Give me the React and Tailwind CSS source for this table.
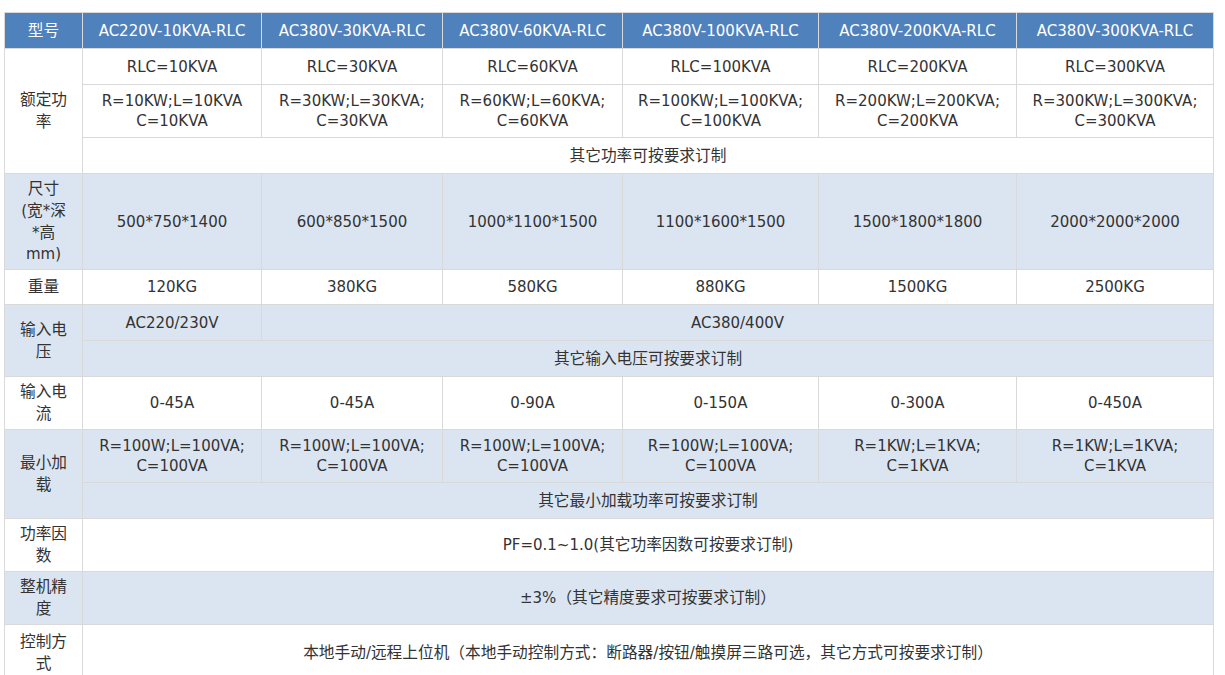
import React from 'react';

const models = [
	'AC220V-10KVA-RLC',
	'AC380V-30KVA-RLC',
	'AC380V-60KVA-RLC',
	'AC380V-100KVA-RLC',
	'AC380V-200KVA-RLC',
	'AC380V-300KVA-RLC',
];

const rlc = ['10', '30', '60', '100', '200', '300'];
const sizes = ['500*750*1400', '600*850*1500', '1000*1100*1500', '1100*1600*1500', '1500*1800*1800', '2000*2000*2000'];
const weights = ['120KG', '380KG', '580KG', '880KG', '1500KG', '2500KG'];
const currents = ['0-45A', '0-45A', '0-90A', '0-150A', '0-300A', '0-450A'];
const minLoads = [
	['R=100W;L=100VA;', 'C=100VA'],
	['R=100W;L=100VA;', 'C=100VA'],
	['R=100W;L=100VA;', 'C=100VA'],
	['R=100W;L=100VA;', 'C=100VA'],
	['R=1KW;L=1KVA;', 'C=1KVA'],
	['R=1KW;L=1KVA;', 'C=1KVA'],
];

const td = 'border border-[#d9d9d9] text-center align-middle px-2 leading-[20px]';
const light = 'bg-[#dbe5f1]';

// chinese runs come out a bit larger than the latin ones in the original
function T({ s }) {
	return s.split(/([\u3000-\u9fff\uff00-\uffef]+)/).map((part, i) =>
		i % 2 ? (
			<span key={i} className="text-[15.7px]">
				{part}
			</span>
		) : (
			part
		)
	);
}

function Head({ children, rowSpan }) {
	return (
		<td rowSpan={rowSpan} className={`${td} px-[9px] leading-[21px]`}>
			<T s={children} />
		</td>
	);
}

export default function App() {
	return (
		<div
			className="min-h-screen bg-white pt-3 pl-1 text-[15px] text-[#333]"
			style={{ fontFamily: '"DejaVu Sans", "Noto Sans CJK SC", sans-serif' }}
		>
			<table className="w-[1209px] table-fixed border-collapse">
				<colgroup>
					<col className="w-[78px]" />
					<col className="w-[179px]" />
					<col className="w-[181px]" />
					<col className="w-[180px]" />
					<col className="w-[196px]" />
					<col className="w-[198px]" />
					<col className="w-[197px]" />
				</colgroup>
				<tbody>
					<tr className="h-[36px] bg-[#4f81bd] text-white">
						<td className={`${td} border-[#c9d6e8]`}>
							<T s="型号" />
						</td>
						{models.map((m) => (
							<td key={m} className={`${td} border-[#c9d6e8] whitespace-nowrap`}>
								{m}
							</td>
						))}
					</tr>

					{/* 额定功率 */}
					<tr className="h-[36px] bg-white">
						<Head rowSpan={3}>额定功率</Head>
						{rlc.map((v, i) => (
							<td key={i} className={td}>
								RLC={v}KVA
							</td>
						))}
					</tr>
					<tr className="h-[53px] bg-white">
						{rlc.map((v, i) => (
							<td key={i} className={td}>
								R={v}KW;L={v}KVA{i === 0 ? '' : ';'}
								<br />
								C={v}KVA
							</td>
						))}
					</tr>
					<tr className="h-[36px] bg-white">
						<td colSpan={6} className={td}>
							<T s="其它功率可按要求订制" />
						</td>
					</tr>

					{/* 尺寸 */}
					<tr className={`h-[96px] ${light}`}>
						<td className={`${td} px-[6px] leading-[21px]`}>
							<T s="尺寸" />
							<br />
							<T s="(宽*深" />
							<br />
							<T s="*高" />
							<br />
							mm)
						</td>
						{sizes.map((s, i) => (
							<td key={i} className={td}>
								{s}
							</td>
						))}
					</tr>

					<tr className="h-[35px] bg-white">
						<td className={td}>
							<T s="重量" />
						</td>
						{weights.map((w, i) => (
							<td key={i} className={td}>
								{w}
							</td>
						))}
					</tr>

					{/* 输入电压 */}
					<tr className={`h-[36px] ${light}`}>
						<Head rowSpan={2}>输入电压</Head>
						<td className={td}>AC220/230V</td>
						<td colSpan={5} className={td}>
							AC380/400V
						</td>
					</tr>
					<tr className={`h-[36px] ${light}`}>
						<td colSpan={6} className={td}>
							<T s="其它输入电压可按要求订制" />
						</td>
					</tr>

					<tr className="h-[53px] bg-white">
						<Head>输入电流</Head>
						{currents.map((c, i) => (
							<td key={i} className={td}>
								{c}
							</td>
						))}
					</tr>

					{/* 最小加载 */}
					<tr className={`h-[53px] ${light}`}>
						<Head rowSpan={2}>最小加载</Head>
						{minLoads.map(([a, b], i) => (
							<td key={i} className={td}>
								{a}
								<br />
								{b}
							</td>
						))}
					</tr>
					<tr className={`h-[36px] ${light}`}>
						<td colSpan={6} className={td}>
							<T s="其它最小加载功率可按要求订制" />
						</td>
					</tr>

					<tr className="h-[53px] bg-white">
						<Head>功率因数</Head>
						<td colSpan={6} className={td}>
							<T s="PF=0.1~1.0(其它功率因数可按要求订制)" />
						</td>
					</tr>

					<tr className={`h-[53px] ${light}`}>
						<Head>整机精度</Head>
						<td colSpan={6} className={td}>
							<T s="±3%（其它精度要求可按要求订制）" />
						</td>
					</tr>

					<tr className="h-[56px] bg-white">
						<Head>控制方式</Head>
						<td colSpan={6} className={td}>
							<T s="本地手动/远程上位机（本地手动控制方式：断路器/按钮/触摸屏三路可选，其它方式可按要求订制）" />
						</td>
					</tr>
				</tbody>
			</table>
		</div>
	);
}
